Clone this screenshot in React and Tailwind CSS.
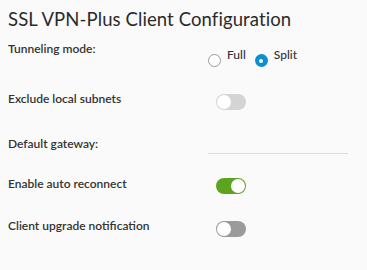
import React from 'react';

function Toggle({ on, track }) {
  return (
    <div className={`relative ml-[8px] w-[30px] h-[16px] rounded-full ${track}`}>
      <span
        className={`absolute top-[1px] w-[14px] h-[14px] rounded-full bg-white ${on ? 'right-[1px]' : 'left-[1px]'}`}
      />
    </div>
  );
}

function Radio({ checked, label }) {
  return (
    <label className="flex items-start gap-[6px]">
      <span
        className={`mt-[7px] flex items-center justify-center w-[13px] h-[13px] rounded-full ${
          checked ? 'bg-[#0a8fd1]' : 'border border-[#9a9a9a] bg-white'
        }`}
      >
        {checked && <span className="w-[4px] h-[4px] rounded-full bg-white" />}
      </span>
      <span>{label}</span>
    </label>
  );
}

export default function App() {
  return (
    <div className="w-[367px] h-[270px] bg-[#fafafa] px-2 pt-[7px] text-[#333] font-['Lato',sans-serif] overflow-hidden">
      <h1 className="text-[18.5px] leading-[24px] text-[#2b2b2b] tracking-[0.1px]">SSL VPN-Plus Client Configuration</h1>

      <div className="mt-[10px] text-[12px] leading-[16px] font-semibold">
        {/* Tunneling */}
        <div className="flex h-[50px]">
          <div className="w-[200px]">Tunneling mode:</div>
          <div className="flex gap-[9px] mt-[6px] font-medium">
            <Radio label="Full" />
            <Radio checked label="Split" />
          </div>
        </div>

        {/* Exclude subnets */}
        <div className="flex h-[45px]">
          <div className="w-[200px]">Exclude local subnets</div>
          <div className="mt-[3px]">
            <Toggle track="bg-[#d4d4d4]" />
          </div>
        </div>

        {/* Gateway */}
        <div className="flex h-[40px]">
          <div className="w-[200px]">Default gateway:</div>
          <div className="w-[140px] h-[18px] border-b border-[#dcdcdc]" />
        </div>

        {/* Auto reconnect */}
        <div className="flex h-[42px]">
          <div className="w-[200px]">Enable auto reconnect</div>
          <div className="mt-[2px]">
            <Toggle on track="bg-[#5ca41f]" />
          </div>
        </div>

        {/* Upgrade notification */}
        <div className="flex h-[42px]">
          <div className="w-[200px]">Client upgrade notification</div>
          <div className="mt-[3px]">
            <Toggle track="bg-[#9b9b9b]" />
          </div>
        </div>
      </div>
    </div>
  );
}
